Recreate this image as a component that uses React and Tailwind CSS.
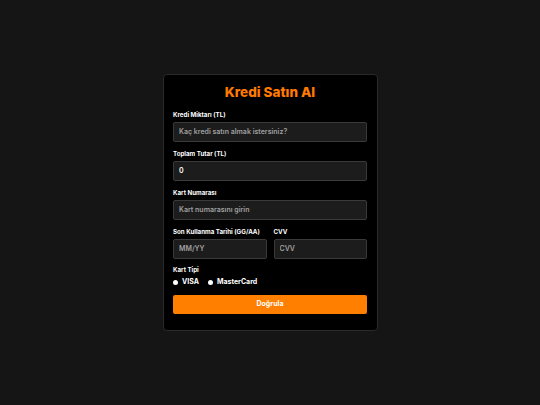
const Field = ({ label, placeholder, value, className = "" }) => (
  <div className={className}>
    <label className="block text-[6.2px] leading-[8px] font-bold text-white mb-[3px]">
      {label}
    </label>
    <input
      type="text"
      placeholder={placeholder}
      defaultValue={value}
      className="block w-full h-[20px] px-[5px] bg-[#1c1c1c] border border-[#3a3a3a] rounded-[2px] text-[7px] font-semibold text-white placeholder:text-[#a0a0a0] outline-none"
    />
  </div>
);

const Radio = ({ label }) => (
  <label className="flex items-center gap-[4px] text-[7px] leading-[8px] font-bold text-white">
    <span className="w-[5px] h-[5px] rounded-full bg-white" />
    {label}
  </label>
);

export default function App() {
  return (
    <div
      className="min-h-screen w-full flex items-center justify-center bg-[#151515]"
      style={{ fontFamily: "Inter, 'Noto Sans', sans-serif" }}
    >
      <div className="w-[215px] bg-black border border-[#2a2a2a] rounded-[4px] px-[9.5px] pt-[9px] pb-[16px] text-[7px] leading-[8px]">
        <h2 className="text-center text-[13.5px] leading-[16px] font-extrabold text-[#ff7a00] mb-[10.5px]">
          Kredi Satın Al
        </h2>

        <Field label="Kredi Miktarı (TL)" placeholder="Kaç kredi satın almak istersiniz?" className="mb-[8px]" />
        <Field label="Toplam Tutar (TL)" value="0" className="mb-[8px]" />
        <Field label="Kart Numarası" placeholder="Kart numarasını girin" className="mb-[8px]" />

        <div className="flex gap-[7px] mb-[7px]">
          <Field label="Son Kullanma Tarihi (GG/AA)" placeholder="MM/YY" className="flex-1" />
          <Field label="CVV" placeholder="CVV" className="flex-1" />
        </div>

        <div className="text-[6.2px] leading-[8px] font-bold text-white mb-[3px]">Kart Tipi</div>
        <div className="flex items-center gap-[9px] h-[11px] mb-[7px]">
          <Radio label="VISA" />
          <Radio label="MasterCard" />
        </div>

        <button className="block w-full h-[19px] bg-[#ff7f00] rounded-[2px] text-[7px] font-bold text-white">
          Doğrula
        </button>
      </div>
    </div>
  );
}
